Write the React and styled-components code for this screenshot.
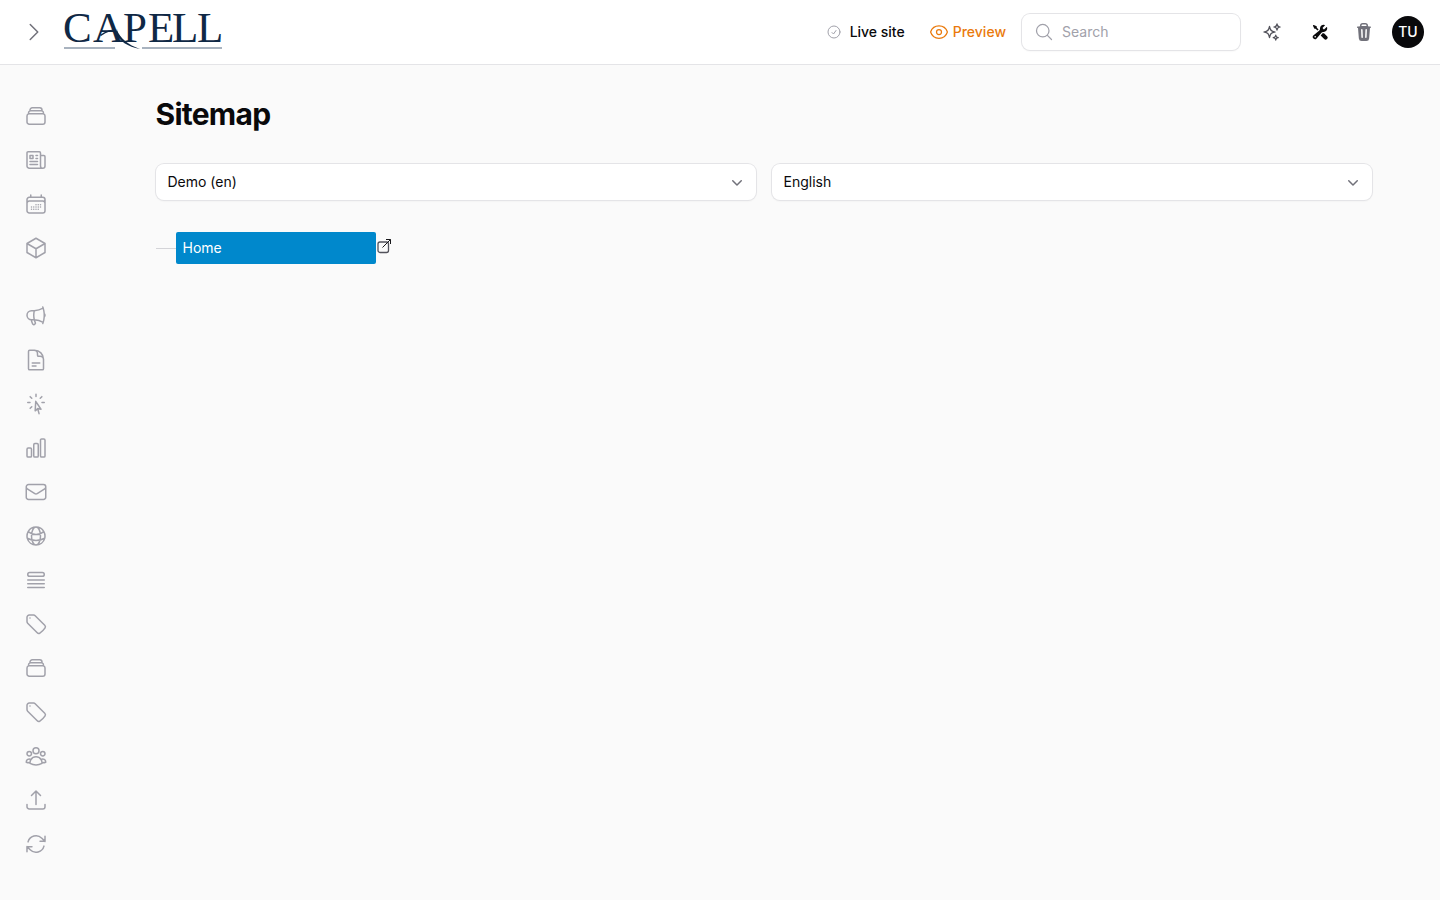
import React from 'react';
import styled, { createGlobalStyle } from 'styled-components';
import {
    HiOutlineRectangleStack,
    HiOutlineNewspaper,
    HiOutlineCalendarDays,
    HiOutlineCube,
    HiOutlineMegaphone,
    HiOutlineDocumentText,
    HiOutlineCursorArrowRays,
    HiOutlineChartBar,
    HiOutlineEnvelope,
    HiOutlineGlobeAlt,
    HiOutlineQueueList,
    HiOutlineTag,
    HiOutlineUserGroup,
    HiOutlineArrowUpTray,
    HiOutlineArrowPath,
    HiOutlineCheckCircle,
    HiOutlineEye,
    HiOutlineMagnifyingGlass,
    HiOutlineSparkles,
    HiOutlineChevronRight,
    HiMiniWrenchScrewdriver,
    HiMiniTrash,
    HiMiniChevronDown
} from 'react-icons/hi2';

const GlobalStyle = createGlobalStyle`
    html, body {
        margin: 0;
        padding: 0;
        background: #fafafa;
        font-family: 'Inter', 'Liberation Sans', sans-serif;
        color: #09090b;
    }
`;

const Page = styled.div`
    display: flex;
    flex-direction: column;
    height: 100vh;
    overflow: hidden;
`;

const Header = styled.header`
    align-items: center;
    background: #fff;
    border-bottom: 1px solid #e4e4e7;
    box-sizing: border-box;
    display: flex;
    flex: none;
    height: 65px;
    padding: 0 16px 1px 22px;
`;

const Toggle = styled.div`
    color: #71717a;
    display: flex;
    margin-right: 18px;

    svg {
        height: 24px;
        stroke-width: 1.5;
        width: 24px;
    }
`;

const Actions = styled.div`
    align-items: center;
    display: flex;
    margin-left: auto;
`;

const SiteLink = styled.span`
    align-items: center;
    color: ${props => (props.$orange ? '#ea7a0c' : '#09090b')};
    display: flex;
    font-size: 14px;
    font-weight: 500;
    gap: ${props => (props.$orange ? '4px' : '8px')};
    line-height: 20px;
    margin-right: ${props => props.$mr}px;

    svg {
        color: ${props => (props.$orange ? '#ea7a0c' : '#a1a1aa')};
        height: ${props => (props.$orange ? '20px' : '16px')};
        width: ${props => (props.$orange ? '20px' : '16px')};
    }
`;

const SearchBox = styled.div`
    align-items: center;
    background: #fff;
    border-radius: 8px;
    box-shadow: 0 0 0 1px #e4e4e7, 0 1px 2px rgba(0, 0, 0, 0.08);
    box-sizing: border-box;
    color: #a1a1aa;
    display: flex;
    font-size: 14px;
    gap: 8px;
    height: 36px;
    margin-right: 22px;
    padding: 0 12px;
    width: 218px;

    svg {
        color: #a1a1aa;
        height: 20px;
        width: 20px;
    }
`;

const ToolIcon = styled.span`
    color: ${props => props.$color};
    display: flex;
    margin-right: ${props => props.$mr}px;

    svg {
        height: ${props => props.$size}px;
        width: ${props => props.$size}px;
    }
`;

const Avatar = styled.div`
    align-items: center;
    background: #09090b;
    border-radius: 50%;
    color: #fff;
    display: flex;
    font-size: 14px;
    font-weight: 500;
    height: 32px;
    justify-content: center;
    width: 32px;
`;

const Body = styled.div`
    display: flex;
    flex: 1;
    min-height: 0;
`;

const Sidebar = styled.nav`
    box-sizing: border-box;
    display: flex;
    flex: none;
    flex-direction: column;
    gap: 24px;
    padding: 29px 0 0 24px;
    width: 156px;
`;

const NavGroup = styled.div`
    display: flex;
    flex-direction: column;
`;

const NavItem = styled.div`
    align-items: center;
    color: #a1a1aa;
    display: flex;
    height: 44px;

    svg {
        height: 24px;
        width: 24px;
    }
`;

const Main = styled.main`
    flex: 1;
    padding: 31px 68px 0 0;
`;

const Title = styled.h1`
    font-size: 30px;
    font-weight: 700;
    letter-spacing: -0.025em;
    line-height: 36px;
    margin: 0 0 32px -0.5px;
`;

const Filters = styled.div`
    display: grid;
    gap: 16px;
    grid-template-columns: 1fr 1fr;
    margin-bottom: 32px;
`;

const Select = styled.div`
    align-items: center;
    background: #fff;
    border-radius: 8px;
    box-shadow: 0 0 0 1px #e4e4e7, 0 1px 2px rgba(0, 0, 0, 0.08);
    box-sizing: border-box;
    display: flex;
    font-size: 14px;
    height: 36px;
    justify-content: space-between;
    padding: 0 9px 1px 11.5px;

    svg {
        color: #71717a;
        height: 20px;
        width: 20px;
    }
`;

const TreeRow = styled.div`
    align-items: center;
    display: flex;
`;

const Connector = styled.div`
    background: #d4d4d8;
    height: 1px;
    width: 20px;
`;

const TreeNode = styled.div`
    align-items: center;
    background: #0088cc;
    border-radius: 2px;
    box-sizing: border-box;
    color: #fff;
    display: flex;
    font-size: 14px;
    height: 32px;
    padding: 0 0 2px 6.5px;
    width: 200px;
`;

const NodeLink = styled.svg`
    align-self: flex-start;
    display: block;
    height: 16px;
    margin-top: 6px;
    width: 16px;
`;

// logo wordmark is kept as live text, only the swoosh and rules are drawn
const Logo = () => (
    <svg width="160" height="56" viewBox="0 0 160 56" style={{ display: 'block' }}>
        <text
            x="-1 29 59 84 108 133"
            y="38"
            fill="#0f2845"
            fontFamily="'Liberation Serif', serif"
            fontSize="43">
            CAPELL
        </text>
        <path d="M36 31 C41 27 47 25 54 25 C48 26 43 28 37 32 Z" fill="#0f2845" />
        <path d="M53 26 C56 34 64 41 76 45 C64 43 55 37 51 28 Z" fill="#0f2845" />
        <rect x="0" y="43" width="51" height="2" fill="#a9b3bf" />
        <rect x="78" y="43" width="80" height="2" fill="#a9b3bf" />
    </svg>
);

const navGroups = [
    [HiOutlineRectangleStack, HiOutlineNewspaper, HiOutlineCalendarDays, HiOutlineCube],
    [
        HiOutlineMegaphone,
        HiOutlineDocumentText,
        HiOutlineCursorArrowRays,
        HiOutlineChartBar,
        HiOutlineEnvelope,
        HiOutlineGlobeAlt,
        HiOutlineQueueList,
        HiOutlineTag,
        HiOutlineRectangleStack,
        HiOutlineTag,
        HiOutlineUserGroup,
        HiOutlineArrowUpTray,
        HiOutlineArrowPath
    ]
];

const App = () => (
    <Page>
        <GlobalStyle />
        <Header>
            <Toggle>
                <HiOutlineChevronRight />
            </Toggle>
            <Logo />
            <Actions>
                <SiteLink $mr={24}>
                    <HiOutlineCheckCircle />
                    Live site
                </SiteLink>
                <SiteLink $orange $mr={16}>
                    <HiOutlineEye />
                    Preview
                </SiteLink>
                <SearchBox>
                    <HiOutlineMagnifyingGlass />
                    Search
                </SearchBox>
                <ToolIcon $color="#52525b" $size={20} $mr={30}>
                    <HiOutlineSparkles />
                </ToolIcon>
                <ToolIcon $color="#09090b" $size={16} $mr={26}>
                    <HiMiniWrenchScrewdriver />
                </ToolIcon>
                <ToolIcon $color="#71717a" $size={20} $mr={18}>
                    <HiMiniTrash />
                </ToolIcon>
                <Avatar>TU</Avatar>
            </Actions>
        </Header>
        <Body>
            <Sidebar>
                {navGroups.map((group, idx) => (
                    <NavGroup key={idx}>
                        {group.map((Icon, i) => (
                            <NavItem key={i}>
                                <Icon />
                            </NavItem>
                        ))}
                    </NavGroup>
                ))}
            </Sidebar>
            <Main>
                <Title>Sitemap</Title>
                <Filters>
                    <Select>
                        Demo (en)
                        <HiMiniChevronDown />
                    </Select>
                    <Select>
                        English
                        <HiMiniChevronDown />
                    </Select>
                </Filters>
                <TreeRow>
                    <Connector />
                    <TreeNode>Home</TreeNode>
                    <NodeLink viewBox="0 0 16 16" fill="none">
                        <rect x="2" y="4" width="10.5" height="10.5" rx="2" stroke="#52525b" strokeWidth="1.3" />
                        <path d="M6.5 9.5 L14.5 1.5 M10 1.5 H14.5 V6" stroke="#18181b" strokeWidth="1" />
                    </NodeLink>
                </TreeRow>
            </Main>
        </Body>
    </Page>
);

export default App;
